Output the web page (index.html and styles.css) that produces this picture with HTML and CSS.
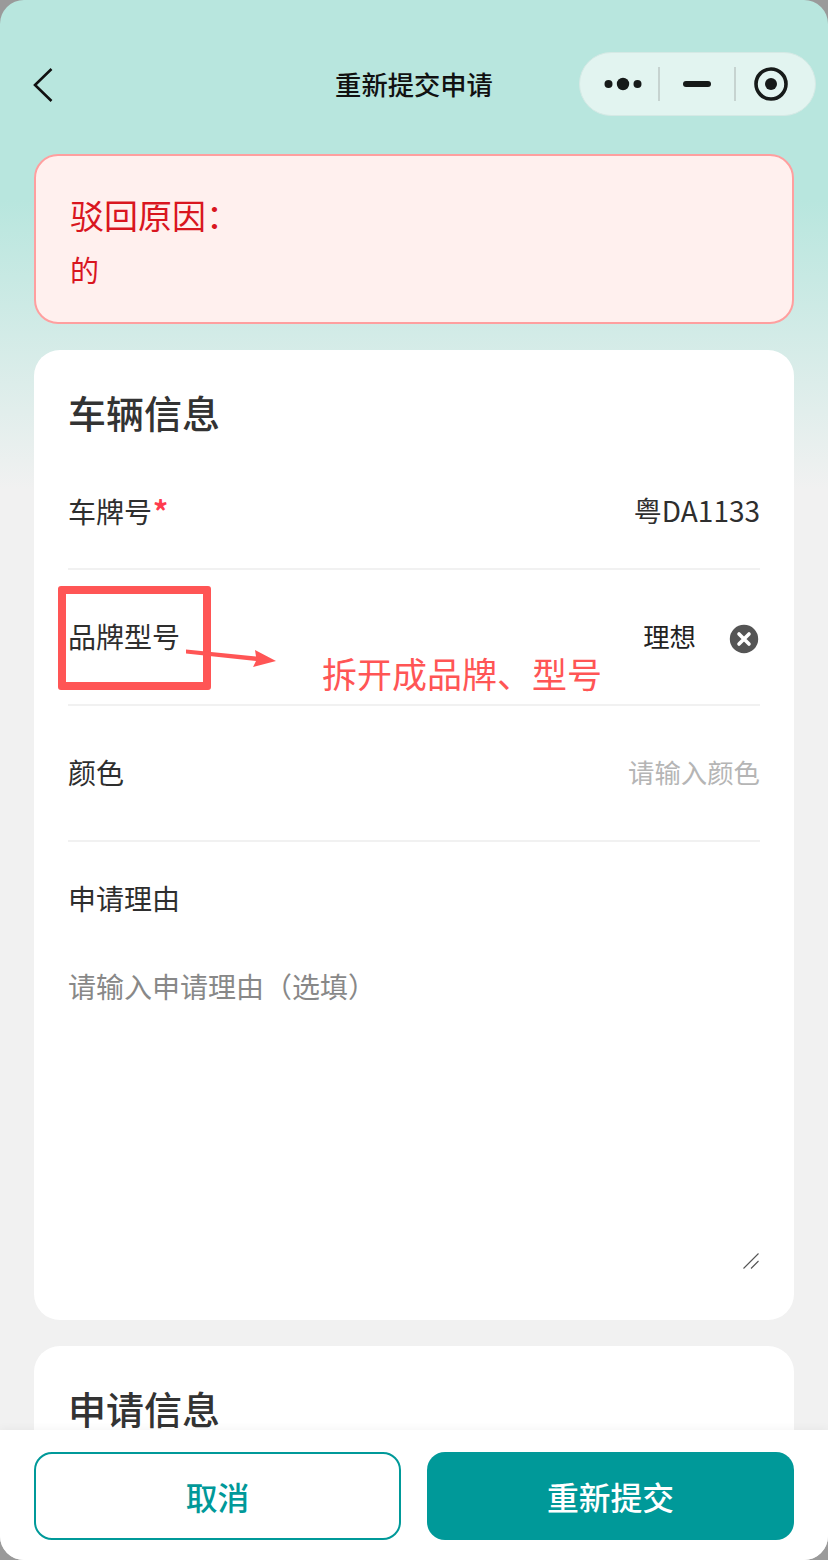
FILE: index.html
```html
<!DOCTYPE html>
<html lang="zh-CN">
<head>
    <meta charset="UTF-8">
    <meta name="viewport" content="width=device-width, initial-scale=1.0">
    <title>重新提交申请</title>
    <link rel="stylesheet" href="styles.css">
</head>
<body>
<div class="screen">
    <div class="navbar">
        <svg class="back" width="24" height="36" viewBox="0 0 24 36"><path d="M20.5 2 L4 18 L20.5 34" fill="none" stroke="#111" stroke-width="2.6"/></svg>
        <div class="nav-title">重新提交申请</div>
        <div class="capsule">
            <svg width="40" height="16" viewBox="0 0 40 16"><circle cx="4.5" cy="8" r="4" fill="#161a19"/><circle cx="19" cy="8" r="6.2" fill="#161a19"/><circle cx="33.5" cy="8" r="4" fill="#161a19"/></svg>
            <i class="capsule-line"></i>
            <span class="capsule-min"></span>
            <i class="capsule-line"></i>
            <svg width="34" height="34" viewBox="0 0 34 34"><circle cx="17" cy="17" r="15" fill="none" stroke="#161a19" stroke-width="3.6"/><circle cx="17" cy="17" r="6" fill="#161a19"/></svg>
        </div>
    </div>

    <div class="reject">
        <div class="reject-title">驳回原因：</div>
        <div class="reject-text">的</div>
    </div>

    <div class="card">
        <div class="card-title">车辆信息</div>
        <div class="row row-first">
            <div class="row-label">车牌号<span class="star">*</span></div>
            <div class="row-value">粤DA1133</div>
        </div>
        <div class="row">
            <div class="row-label">品牌型号</div>
            <div class="row-value brand">理想</div>
            <svg class="clear" width="30" height="30" viewBox="0 0 30 30"><circle cx="15" cy="15" r="14.2" fill="#555"/><path d="M10 10 L20 20 M20 10 L10 20" stroke="#fff" stroke-width="3.6" stroke-linecap="round"/></svg>
        </div>
        <div class="row">
            <div class="row-label">颜色</div>
            <div class="row-value placeholder">请输入颜色</div>
        </div>
        <div class="reason">
            <div class="row-label">申请理由</div>
            <div class="reason-input">请输入申请理由（选填）</div>
            <svg class="resize" width="16" height="16" viewBox="0 0 16 16"><path d="M0.5 15.5 L15.5 0.5 M8 15.5 L15.5 8" stroke="#555" stroke-width="1.1"/></svg>
        </div>
    </div>

    <div class="card card-second">
        <div class="card-title">申请信息</div>
    </div>

    <div class="footer">
        <div class="btn btn-cancel">取消</div>
        <div class="btn btn-submit">重新提交</div>
    </div>

    <!-- 标注 -->
    <div class="mark-box"></div>
    <svg class="mark-arrow" width="94" height="24" viewBox="0 0 94 24"><path d="M0 1.5 L70 8.5 L69 2 L90 13 L67 19 L70 13 L0 5.5 Z" fill="#ff5555"/></svg>
    <div class="mark-text">拆开成品牌、型号</div>
</div>
</body>
</html>
```

FILE: styles.css
```css
* {
    box-sizing: border-box;
}
html, body {
    margin: 0;
    padding: 0;
    background: #9a9a9a;
}
body {
    font-family: "Noto Sans CJK SC", "Noto Sans", sans-serif;
    color: #333;
}
.screen {
    position: relative;
    width: 828px;
    height: 1560px;
    overflow: hidden;
    border-radius: 24px;
    padding: 0 34px;
    background: linear-gradient(180deg, #b8e6de 0, #b8e6de 200px, #f1f1f1 490px);
}
.navbar {
    position: relative;
    height: 154px;
    margin: 0 -34px;
}
.back {
    position: absolute;
    left: 31px;
    top: 67px;
}
.nav-title {
    position: absolute;
    left: 0;
    right: 0;
    top: 64px;
    text-align: center;
    font-size: 26.3px;
    line-height: 40px;
    font-weight: 500;
    color: #111;
}
.capsule {
    position: absolute;
    left: 579px;
    top: 52px;
    width: 237px;
    height: 64px;
    display: flex;
    align-items: center;
    padding-left: 24px;
    border-radius: 32px;
    border: 1px solid #d5e9e5;
    background: #e2f4f0;
}
.capsule-line {
    width: 2px;
    height: 34px;
    margin-left: 14px;
    background: #c6d3d0;
}
.capsule-line + .capsule-min {
    margin-left: 23px;
}
.capsule-min {
    width: 28px;
    height: 6px;
    border-radius: 3px;
    background: #161a19;
}
.capsule-min + .capsule-line {
    margin-left: 23px;
}
.capsule svg:last-child {
    margin-left: 18px;
}
.reject {
    height: 170px;
    padding: 36px 34px 0;
    border: 2px solid #ff9f9f;
    border-radius: 24px;
    background: #fff0ee;
    color: #d9161f;
}
.reject-title {
    font-size: 34px;
    line-height: 46px;
}
.reject-text {
    margin-top: 11px;
    font-size: 29px;
    line-height: 40px;
}
.card {
    margin-top: 26px;
    padding: 0 34px;
    border-radius: 26px;
    background: #fff;
}
.card-second {
    height: 200px;
}
.card-title {
    padding-top: 34px;
    height: 84px;
    font-size: 38px;
    line-height: 56px;
    font-weight: 500;
    color: #333;
}
.row {
    display: flex;
    align-items: center;
    height: 136px;
    padding-bottom: 2px;
    border-bottom: 2px solid #f1f1f1;
    font-size: 28px;
}
.row-first {
    padding-top: 20px;
}
.row-label {
    font-size: 28px;
    line-height: 40px;
    color: #2e2e2e;
}
.star {
    color: #ff3b4e;
    margin-left: 1px;
    font-size: 30px;
    font-weight: 700;
}
.row-value {
    margin-left: auto;
    color: #2e2e2e;
}
.brand {
    margin-right: 33px;
    padding-bottom: 2px;
    font-size: 26.4px;
    color: #222;
}
.clear {
    flex: none;
    margin-top: 6px;
    margin-right: 1px;
}
.placeholder {
    padding-bottom: 2px;
    font-size: 26.4px;
    color: #b5b5b5;
}
.reason {
    position: relative;
    height: 478px;
    padding-top: 36px;
}
.reason-input {
    margin-top: 48px;
    font-size: 28px;
    line-height: 40px;
    color: #888;
}
.resize {
    position: absolute;
    right: 1px;
    top: 411px;
}
.footer {
    position: absolute;
    left: 0;
    right: 0;
    bottom: 0;
    height: 130px;
    display: flex;
    gap: 26px;
    padding: 22px 34px 0;
    background: #fff;
    box-shadow: 0 -2px 8px rgba(0, 0, 0, 0.04);
}
.btn {
    width: 367px;
    height: 88px;
    display: flex;
    align-items: center;
    justify-content: center;
    border-radius: 18px;
    font-size: 31.8px;
    font-weight: 500;
}
.btn-cancel {
    border: 2px solid #009999;
    color: #009999;
}
.btn-submit {
    background: #009999;
    color: #fff;
}
.mark-box {
    position: absolute;
    left: 58px;
    top: 586px;
    width: 153px;
    height: 104px;
    border: 8px solid #ff5555;
    border-radius: 3px;
}
.mark-arrow {
    position: absolute;
    left: 186px;
    top: 648px;
}
.mark-text {
    position: absolute;
    left: 322px;
    top: 648px;
    font-size: 35px;
    line-height: 50px;
    color: #ff5555;
}
```
